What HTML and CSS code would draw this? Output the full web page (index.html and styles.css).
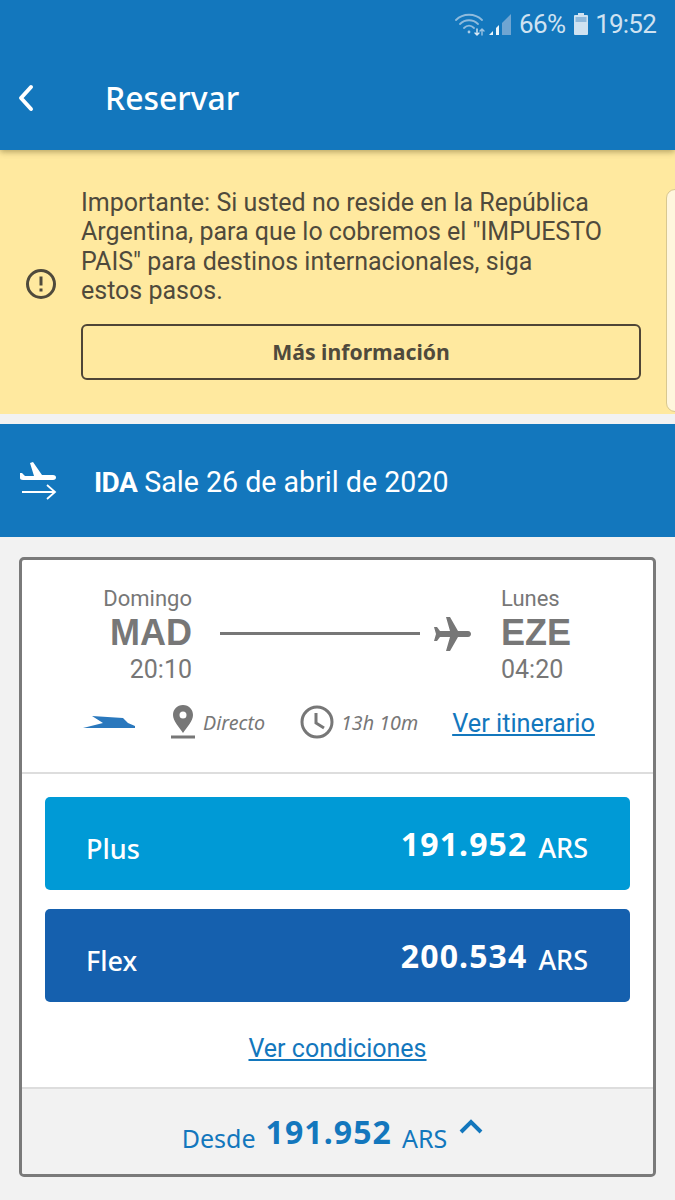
FILE: index.html
```html
<!DOCTYPE html>
<html lang="es">
<head>
<meta charset="utf-8">
<title>Reservar</title>
<link rel="stylesheet" href="styles.css">
</head>
<body>
<header class="appbar">
  <div class="status">
    <svg class="st-wifi" width="30" height="24" viewBox="0 0 30 24" fill="none" stroke="#8fbbdd" stroke-width="1.8" stroke-linecap="round"><path d="M1 8C8 1 20 1 27 8"/><path d="M5 12C10 7 18 7 23 12"/><path d="M9 16C12 13 16 13 19 16"/><circle cx="14" cy="20" r="1.4" fill="#a9cbe6" stroke="none"/><path d="M22 17v6M20 21l2 2 2-2" stroke="#dcebf6" stroke-width="1.4"/><path d="M27 23v-6M25 19l2-2 2 2" stroke="#9cc3e2" stroke-width="1.4"/></svg>
    <svg class="st-signal" width="24" height="24" viewBox="0 0 24 24"><path d="M1 23l4-4v4z" fill="#eef6fb"/><path d="M8 23v-7l3-3v10z" fill="#eef6fb"/><path d="M14 23V11l9-9v21z" fill="#6fa5d2"/></svg>
    <span class="st-pct">66%</span>
    <svg class="st-bat" width="16" height="24" viewBox="0 0 16 24"><path d="M5 1h6v2h3a1 1 0 0 1 1 1v18a1 1 0 0 1-1 1H2a1 1 0 0 1-1-1V4a1 1 0 0 1 1-1h3z" fill="#cfe2f1"/><rect x="2.5" y="5" width="11" height="5" fill="#8fb9dc"/></svg>
    <span class="st-time">19:52</span>
  </div>
  <div class="titlebar">
    <svg class="back" width="18" height="28" viewBox="0 0 18 28" fill="none" stroke="#fff" stroke-width="4" stroke-linecap="round" stroke-linejoin="round"><path d="M15 3L5 14l10 11"/></svg>
    <h1 class="title">Reservar</h1>
  </div>
</header>

<section class="notice">
  <svg class="notice-icon" width="32" height="32" viewBox="0 0 32 32" fill="none"><circle cx="16" cy="16" r="13.5" stroke="#4f4a3c" stroke-width="3"/><path d="M16 8.5v9" stroke="#4f4a3c" stroke-width="3"/><rect x="14.5" y="20.5" width="3" height="3" fill="#4f4a3c"/></svg>
  <div class="notice-body">
    <p class="notice-text">Importante: Si usted no reside en la República<br>Argentina, para que lo cobremos el "IMPUESTO<br>PAIS" para destinos internacionales, siga<br>estos pasos.</p>
    <div class="notice-btn">Más información</div>
  </div>
  <div class="peek"></div>
</section>

<section class="band">
  <svg class="band-icon" width="40" height="40" viewBox="0 0 40 40" fill="none"><path d="M12 1l3-1 9 13h11c2 0 3 1 3 2.500S37 18 35 18H5c-2 0-3-1-3-2v-5l2 0 3 3h9z" fill="#fff"/><path d="M4 30h33M29 23l8 7-8 7" stroke="#fff" stroke-width="1.800"/></svg>
  <p class="band-text"><b class="band-strong">IDA</b> Sale 26 de abril de 2020</p>
</section>

<section class="card">
  <div class="route">
    <div class="endpoint right">
      <span class="ep-day">Domingo</span>
      <span class="ep-code">MAD</span>
      <span class="ep-time">20:10</span>
    </div>
    <div class="line"></div>
    <svg class="plane" width="40" height="36" viewBox="0 0 40 36"><path d="M14 1h4l8 14h10c2 0 3 1.500 3 3s-1 3-3 3H26l-8 14h-4l4-14H8l-3 4H2l2-7-2-7h3l3 4h10z" fill="#777"/></svg>
    <div class="endpoint">
      <span class="ep-day">Lunes</span>
      <span class="ep-code">EZE</span>
      <span class="ep-time">04:20</span>
    </div>
  </div>
  <div class="meta">
    <svg class="airline" width="54" height="14" viewBox="0 0 54 14"><path d="M10 1l31 2 5 5 7 3v2H1l20-5z" fill="#2a78bd"/></svg>
    <svg class="pin" width="24" height="34" viewBox="0 0 24 34"><path fill-rule="evenodd" d="M12 0c6 0 10 4.500 10 10 0 6-6 12-10 18C8 22 2 16 2 10 2 4.500 6 0 12 0zm0 6.500a3.500 3.500 0 1 0 0 7 3.500 3.500 0 0 0 0-7z" fill="#777"/><rect y="30.500" width="24" height="3" fill="#777"/></svg>
    <span class="meta-text m-direct">Directo</span>
    <svg class="clock" width="34" height="34" viewBox="0 0 34 34" fill="none" stroke="#777" stroke-width="3"><circle cx="17" cy="17" r="15"/><path d="M16 8v10l8 5"/></svg>
    <span class="meta-text m-dur">13h 10m</span>
    <a class="link m-link">Ver itinerario</a>
  </div>
  <div class="fares">
    <div class="fare plus"><span class="fare-name">Plus</span><span class="fare-price"><b class="amount">191.952</b><span class="cur">ARS</span></span></div>
    <div class="fare flex"><span class="fare-name">Flex</span><span class="fare-price"><b class="amount">200.534</b><span class="cur">ARS</span></span></div>
    <a class="link cond">Ver condiciones</a>
  </div>
  <div class="summary">
    <span class="s-label">Desde</span>
    <b class="s-price">191.952</b>
    <span class="s-label">ARS</span>
    <svg class="chev" width="24" height="16" viewBox="0 0 24 16" fill="none" stroke="#1377bd" stroke-width="4"><path d="M2 14L12 4l10 10"/></svg>
  </div>
</section>
</body>
</html>
```
FILE: styles.css
```css
* { box-sizing: border-box; margin: 0; padding: 0; }
html, body { height: 1200px; overflow: hidden; }
body { background: #f2f2f2; font-family: Roboto, sans-serif; width: 675px; }

.appbar { height: 150px; background: #1377bd; color: #fff; display: flex; flex-direction: column; position: relative; z-index: 1; box-shadow: 0 2px 6px rgba(90,80,30,.45); }
.status { height: 48px; display: flex; align-items: center; justify-content: flex-end; gap: 6px; padding: 0 19px 0 0; color: #cfe2f1; font-size: 26px; }
.st-wifi { margin-right: -3px; }
.st-pct { letter-spacing: -.7px; margin-left: 1px; margin-right: 2px; }
.st-time { letter-spacing: -.8px; }
.titlebar { display: flex; align-items: center; height: 99px; padding-left: 16px; }
.back { flex: none; }
.title { font: 500 31.9px "Noto Sans", sans-serif; margin-left: 71px; }

.notice { height: 264px; background: #ffe99f; display: flex; align-items: center; position: relative; overflow: hidden; padding-left: 25px; }
.notice-icon { flex: none; margin-top: 3px; }
.notice-body { margin-left: 24px; width: 560px; padding-top: 3px; }
.notice-text { font-size: 25px; line-height: 29.5px; color: #4f4a3c; }
.notice-btn { margin-top: 18px; height: 56px; border: 2px solid #4f4536; border-radius: 6px; display: flex; align-items: center; justify-content: center; font: 700 21.2px "Noto Sans", sans-serif; color: #4f4a3c; }
.peek { position: absolute; left: 666px; top: 39px; width: 60px; height: 223px; background: #fff6dd; border: 1px solid #d9c88f; border-radius: 9px; }

.band { margin-top: 10px; height: 113px; background: #1377bd; color: #fff; display: flex; align-items: center; padding: 2px 0 0 18px; }
.band-icon { flex: none; }
.band-text { font-size: 28.6px; margin-left: 36px; }
.band-strong { font-size: 28px; letter-spacing: -.6px; }

.card { margin: 20px 19px 0; height: 620px; background: #fff; border: 3px solid #7a7a7a; border-radius: 5px; display: flex; flex-direction: column; color: #777; overflow: hidden; }
.route { display: flex; align-items: center; padding: 26px 0 0 82px; height: 121px; }
.endpoint { display: flex; flex-direction: column; line-height: 1; width: 88px; }
.endpoint.right { align-items: flex-end; }
.ep-day { font-size: 22px; line-height: 24px; }
.ep-code { font: 700 36px/44px "Liberation Sans", sans-serif; }
.ep-time { font-size: 25px; line-height: 26px; padding-top: 2px; margin-bottom: -2px; }
.line { width: 200px; height: 3px; background: #777; margin: 0 12px 0 28px; }
.plane { margin-right: 29px; flex: none; }

.meta { height: 93px; display: flex; align-items: center; padding: 0 0 9px 60px; border-bottom: 2px solid #ddd; }
.airline { flex: none; }
.pin { flex: none; margin-left: 35px; }
.meta-text { font: italic 400 19.7px "Noto Sans", sans-serif; color: #777; }
.m-direct { margin-left: 8px; }
.clock { flex: none; margin-left: 35px; }
.m-dur { margin-left: 7px; }
.link { color: #1377bd; text-decoration: underline; }
.m-link { font-size: 25.3px; margin-left: 34px; padding-top: 2px; }

.fares { flex: 1; padding: 23px 23px 0; display: flex; flex-direction: column; gap: 19px; }
.fare { height: 93px; border-radius: 5px; color: #fff; display: flex; align-items: center; justify-content: space-between; padding: 0 42px 0 41px; font-family: "Noto Sans", sans-serif; }
.plus { background: #009ad6; }
.flex { background: #1560ae; }
.fare-name { font-size: 27px; font-weight: 500; padding-top: 9px; }
.fare-price { display: flex; align-items: baseline; gap: 11px; }
.amount { font-size: 32px; font-weight: 700; letter-spacing: 1.1px; }
.cur { font-size: 27px; font-weight: 500; transform: translateY(2px); }
.cond { align-self: center; font-size: 25px; margin-top: 13px; }

.summary { height: 87px; border-top: 2px solid #ddd; background: #f2f2f2; color: #1377bd; display: flex; align-items: center; justify-content: center; gap: 10px; padding-right: 10px; font-family: "Noto Sans", sans-serif; }
.s-label { font-size: 25px; margin-top: 12px; }
.s-price { font-size: 32px; letter-spacing: 1.1px; }
.chev { margin: -12px 0 0 2px; }
```
